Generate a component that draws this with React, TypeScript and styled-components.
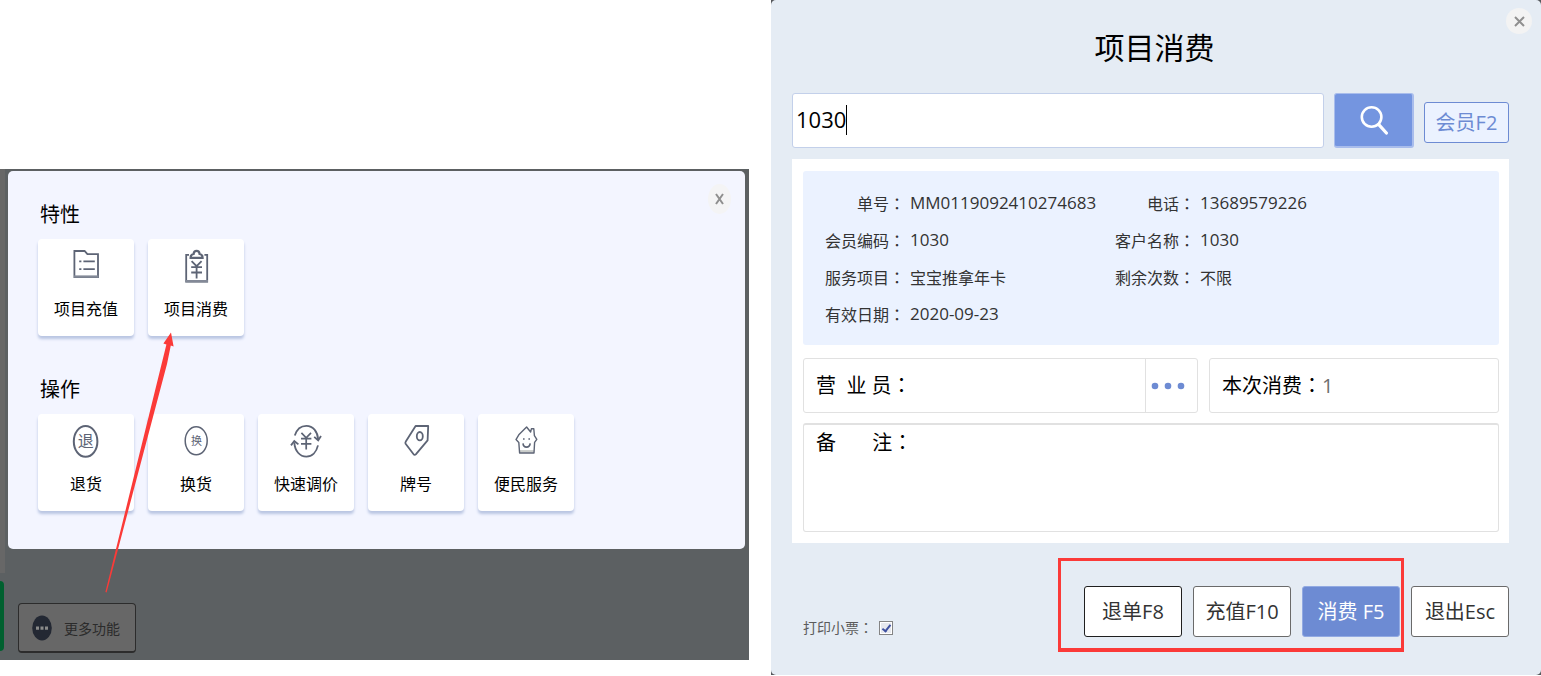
import React, { useState } from "react";
import styled, { createGlobalStyle } from "styled-components";

const GlobalStyle = createGlobalStyle`
  *, *::before, *::after { box-sizing: border-box; }
  body {
    margin: 0;
    background: #fff;
    color: #000;
    font-family: "Open Sans", "Noto Sans CJK SC", sans-serif;
    font-size: 16px;
  }
  button, input, textarea { font: inherit; color: inherit; margin: 0; }
  button { cursor: pointer; }
  h1, h2, dl, dd, dt { margin: 0; font-weight: 400; }
`;

const Page = styled.main`
  display: grid;
  grid-template-columns: minmax(0, 749fr) minmax(0, 770fr);
  column-gap: 22px;
  align-items: start;
`;

/* ---------- left: feature menu ---------- */

const Backdrop = styled.section`
  position: relative;
  display: flex;
  margin-top: 169px;
  background: #5c6062;
`;

const Rail = styled.div`
  flex: none;
  width: 5px;
  display: flex;
  flex-direction: column;
  gap: 8px;
  padding-bottom: 9px;
`;

const RailPanel = styled.div`
  flex: 1;
  background: #676767;
`;

const RailButton = styled.div`
  height: 70px;
  margin-right: 1px;
  border-radius: 0 4px 4px 0;
  background: #00602f;
`;

const Stage = styled.div`
  flex: 1;
  min-width: 0;
  padding: 2px 4px 7px 3px;
`;

const FeatureMenu = styled.div`
  position: relative;
  display: flex;
  flex-direction: column;
  gap: 40px;
  padding: 30px 30px 38px;
  border-radius: 5px;
  background: #f3f5ff;
`;

const Section = styled.section`
  display: flex;
  flex-direction: column;
  gap: 10px;
`;

const SectionTitle = styled.h2`
  padding-left: 2px;
  font-size: 20px;
  line-height: 28px;
`;

const Tiles = styled.div`
  display: flex;
  flex-wrap: wrap;
  gap: 14px;
`;

const Tile = styled.button`
  display: flex;
  flex-direction: column;
  align-items: center;
  gap: 13px;
  width: 96px;
  height: 97px;
  padding: 9px 0 0;
  border: 0;
  border-radius: 4px;
  background: #fff;
  box-shadow: 0 3px 3px #b9c5e2;
  font-size: 16px;
  line-height: 24px;
  white-space: nowrap;
`;

const TileIcon = styled.svg`
  width: 36px;
  height: 36px;
  fill: none;
  stroke: #5d6475;
  stroke-width: 1.8;

  text {
    fill: #5d6475;
    stroke: none;
    text-anchor: middle;
    font-family: "Noto Sans CJK SC", sans-serif;
  }
`;

const MenuClose = styled.button`
  position: absolute;
  top: 13px;
  right: 14px;
  display: grid;
  place-items: center;
  width: 23px;
  height: 30px;
  padding: 0;
  border: 0;
  border-radius: 50%;
  background: #f4f4f5;
`;

const MoreButton = styled.button`
  display: flex;
  align-items: center;
  gap: 12px;
  width: 118px;
  height: 50px;
  margin: 54px 0 0 10px;
  padding: 0 0 0 13px;
  border: 1px solid #2c2c2c;
  border-bottom-width: 2px;
  border-radius: 4px;
  background: #676767;
  color: #2b2b2b;
  font-size: 14px;
  white-space: nowrap;
`;

const Pointer = styled.svg`
  position: absolute;
  top: 162px;
  left: 100px;
  width: 80px;
  height: 264px;
  fill: #fb3a38;
  pointer-events: none;
`;

/* ---------- right: consumption dialog ---------- */

const DialogShell = styled.section`
  background: #55585c;
`;

const Dialog = styled.form`
  position: relative;
  padding: 28px 32px 38px 21px;
  border-radius: 5px;
  background: #e5ecf4;
`;

const DialogTitle = styled.h1`
  padding-left: 8px;
  font-size: 30px;
  line-height: 40px;
  text-align: center;
`;

const DialogClose = styled.button`
  position: absolute;
  top: 8px;
  right: 9px;
  display: grid;
  place-items: center;
  width: 26px;
  height: 26px;
  padding: 0;
  border: 0;
  border-radius: 50%;
  background: #f3f3f3;
`;

const SearchRow = styled.div`
  display: flex;
  align-items: center;
  gap: 10px;
  margin: 25px 0 11px;
`;

const SearchBox = styled.label`
  flex: 1;
  min-width: 0;
  display: flex;
  align-items: center;
  height: 55px;
  padding: 0 0 2px 3px;
  border: 1px solid #c3d0ea;
  border-radius: 3px;
  background: #fff;
`;

const SearchInput = styled.input`
  field-sizing: content;
  max-width: 100%;
  height: 30px;
  padding: 0 0 2px;
  border: 0;
  outline: 0;
  background: none;
  font-size: 22px;
  line-height: 28px;
`;

const Caret = styled.span`
  width: 1px;
  height: 30px;
  background: #000;
`;

const SearchButton = styled.button`
  display: grid;
  place-items: center;
  width: 80px;
  height: 55px;
  padding: 0;
  border: 1px solid #a9bdec;
  border-width: 1px 2px 2px 1px;
  border-radius: 3px;
  background: #7495e0;
`;

const MemberButton = styled.button`
  width: 85px;
  height: 41px;
  margin-top: 4px;
  padding: 0 0 2px;
  border: 1px solid #6d8bd3;
  border-radius: 3px;
  background: #ebf2ff;
  color: #6d8bd3;
  font-size: 20px;
  white-space: nowrap;
`;

const Card = styled.div`
  display: flex;
  flex-direction: column;
  padding: 12px 10px 11px 11px;
  background: #fff;
`;

const Info = styled.dl`
  display: grid;
  grid-template-columns: 290px minmax(0, 1fr);
  grid-auto-rows: 37px;
  align-items: center;
  padding: 13px 0;
  border-radius: 3px;
  background: #ebf2ff;
  color: #333;
`;

const InfoItem = styled.div`
  display: flex;
  align-items: center;
  gap: 5px;
  white-space: nowrap;
`;

const InfoLabel = styled.dt`
  flex: none;
  width: 102px;
  text-align: right;
`;

const InfoValue = styled.dd<{ $numeric?: boolean }>`
  font-size: ${(p) => (p.$numeric ? 17 : 16)}px;
`;

const FullColon = styled.span`
  font-family: "Noto Sans CJK TC", sans-serif;
`;

const FieldRow = styled.div`
  display: grid;
  grid-template-columns: minmax(0, 395fr) minmax(0, 290fr);
  gap: 11px;
  margin: 13px 0 10px;
`;

const Field = styled.div<{ $tall?: boolean }>`
  display: flex;
  align-items: ${(p) => (p.$tall ? "flex-start" : "stretch")};
  height: ${(p) => (p.$tall ? 109 : 55)}px;
  padding-left: 12px;
  border: 1px solid #e1e1e1;
  border-top-width: ${(p) => (p.$tall ? 2 : 1)}px;
  border-radius: 3px;
  font-size: 20px;
`;

const FieldLabel = styled.label`
  flex: none;
  align-self: center;
  line-height: 34px;
  white-space: pre;
`;

const NoteLabel = styled(FieldLabel)`
  align-self: flex-start;
`;

const FieldInput = styled.input`
  flex: 1;
  min-width: 0;
  padding: 0;
  border: 0;
  outline: 0;
  background: none;
  color: #6e6e6e;
`;

const NoteInput = styled.textarea`
  flex: 1;
  min-width: 0;
  height: 100%;
  padding: 4px 0;
  border: 0;
  outline: 0;
  background: none;
  resize: none;
`;

const PickButton = styled.button`
  display: flex;
  align-items: center;
  justify-content: center;
  flex: none;
  width: 52px;
  padding: 0 7px 0 0;
  border: 0;
  border-left: 1px solid #e1e1e1;
  background: none;
`;

const Footer = styled.div`
  display: flex;
  align-items: flex-end;
  justify-content: space-between;
  padding-top: 43px;
`;

const PrintOption = styled.label`
  display: flex;
  align-items: center;
  gap: 6px;
  padding-left: 11px;
  color: #5b5b5b;
  font-size: 14px;
  line-height: 18px;
`;

const Tick = styled.input`
  appearance: none;
  display: grid;
  place-items: center;
  width: 14px;
  height: 14px;
  border: 1px solid #848484;
  background: #e6e8ee;
  box-shadow: inset 0 0 0 1px #fff;

  &:checked::before {
    content: "";
    width: 5px;
    height: 9px;
    border: solid #3f51a0;
    border-width: 0 2px 2px 0;
    transform: rotate(38deg);
  }
`;

const Actions = styled.div`
  display: flex;
  gap: 11px;
`;

const Highlighted = styled(Actions)`
  position: relative;

  &::after {
    content: "";
    position: absolute;
    inset: -28px -4px -15px -26px;
    border: 3px solid #fb3a38;
    border-bottom-width: 4px;
    pointer-events: none;
  }
`;

type Tone = "strong" | "normal" | "primary";

const toneBorder: Record<Tone, string> = {
  strong: "#1f1f1f",
  normal: "#6a6a6a",
  primary: "#92aae2",
};

const ActionButton = styled.button<{ $tone: Tone }>`
  width: 98px;
  height: 51px;
  padding: 0 0 3px;
  border: 1px solid ${(p) => toneBorder[p.$tone]};
  border-radius: 3px;
  background: ${(p) => (p.$tone === "primary" ? "#6d8bd3" : "#fff")};
  color: ${(p) => (p.$tone === "primary" ? "#fff" : "#333")};
  font-size: 20px;
  white-space: nowrap;
`;

/* ---------- drawings ---------- */

const Yen = ({ x, y, s = 1 }: { x: number; y: number; s?: number }) => (
  <g transform={`translate(${x} ${y}) scale(${s})`}>
    <path d="M-5-8.6 0-3.6 5-8.6M0-3.6V8.6M-5.4-2.6H5.4M-5.4 2.7H5.4" />
  </g>
);

const FolderIcon = () => (
  <TileIcon viewBox="0 0 36 36">
    <path d="M6.4 3H16.6L19.4 6.2H30V29.2H6.4Z" />
    <path d="M6 28.6H30.4" stroke="#838997" strokeWidth="2.4" />
    <path d="M11.2 13.4H13.4M15.4 13.4H26.8M11.2 21.2H13.4M15.4 21.2H26.8" />
  </TileIcon>
);

const ClipboardIcon = () => (
  <TileIcon viewBox="0 0 36 36">
    <path d="M11 6.8H8.2V33.6H29.2V6.8H26.4" />
    <path d="M7.4 33.2H30" stroke="#838997" strokeWidth="2.4" />
    <path
      d="M12.6 9.8C12.6 7.6 13.8 6.2 15.6 6C15.8 3.8 16.8 2.8 18.6 2.8S21.4 3.8 21.6 6C23.4 6.2 24.6 7.6 24.6 9.8Z"
      strokeWidth="2.2"
    />
    <Yen x={18.6} y={21.8} />
  </TileIcon>
);

const ReturnIcon = () => (
  <TileIcon viewBox="0 0 36 36">
    <ellipse cx="17.6" cy="18.4" rx="11.8" ry="15.4" strokeWidth="2" />
    <text x="17.8" y="24.2" fontSize="16">退</text>
  </TileIcon>
);

const ExchangeIcon = () => (
  <TileIcon viewBox="0 0 36 36">
    <ellipse cx="18.2" cy="17.8" rx="11" ry="14" strokeWidth="1.5" />
    <text x="18.4" y="21.6" fontSize="11">换</text>
  </TileIcon>
);

const PriceIcon = () => (
  <TileIcon viewBox="0 0 36 36">
    <path d="M6.8 12.6C8.6 6.6 12.8 2.8 18.4 2.8C25 2.8 29.6 8.4 30.2 16.6" />
    <path d="M26.2 13.8 30.2 17.4 33 13" />
    <path d="M30 22.4C28.4 29.2 24 33.6 18.4 33.6C11.8 33.6 6.8 28 6.3 19.4" />
    <path d="M3 22.4 6.3 18 10.4 21.4" />
    <Yen x={18.2} y={18.2} s={0.96} />
  </TileIcon>
);

const TagIcon = () => (
  <TileIcon viewBox="0 0 36 36">
    <path d="M17.6 3H30.2L29.6 17.4L17.8 31.4Q16.6 32.6 15.6 31.2L7.6 20.8Q7 19.6 7.8 18.4Z" strokeLinejoin="round" />
    <ellipse cx="21.8" cy="13.2" rx="3" ry="4.2" />
  </TileIcon>
);

const HouseIcon = () => (
  <TileIcon viewBox="0 0 36 36">
    <path d="M12 28.4H25.8" stroke="#c9ccca" strokeWidth="2.6" />
    <path
      d="M18.6 4 22.6 9 23.4 5.8H25.8L26.4 12.6L28.8 16.4L26.6 19.4L26 30H11.6L10.8 19.4L8 16.6L10.8 11.8Z"
      strokeWidth="1.4"
      strokeLinejoin="round"
    />
    <path d="M15 16H16.6M20.4 16H22" strokeWidth="1.6" />
    <path d="M15 20.4C15.4 25.4 21.6 25.4 22.2 20.4" strokeWidth="1.6" />
  </TileIcon>
);

const Cross = ({ w, h }: { w: number; h: number }) => (
  <svg width={w} height={h} viewBox={`0 0 ${w} ${h}`} stroke="#8f8f8f" strokeWidth="2" aria-hidden="true">
    <path d={`M1 1 ${w - 1} ${h - 1}M${w - 1} 1 1 ${h - 1}`} />
  </svg>
);

const features = [
  { name: "项目充值", Icon: FolderIcon },
  { name: "项目消费", Icon: ClipboardIcon },
];

const operations = [
  { name: "退货", Icon: ReturnIcon },
  { name: "换货", Icon: ExchangeIcon },
  { name: "快速调价", Icon: PriceIcon },
  { name: "牌号", Icon: TagIcon },
  { name: "便民服务", Icon: HouseIcon },
];

const order = [
  { label: "单号", value: "MM0119092410274683", numeric: true },
  { label: "电话", value: "13689579226", numeric: true },
  { label: "会员编码", value: "1030", numeric: true },
  { label: "客户名称", value: "1030", numeric: true },
  { label: "服务项目", value: "宝宝推拿年卡" },
  { label: "剩余次数", value: "不限" },
  { label: "有效日期", value: "2020-09-23", numeric: true },
];

const TileGroup = ({ title, items }: { title: string; items: typeof features }) => (
  <Section>
    <SectionTitle>{title}</SectionTitle>
    <Tiles>
      {items.map(({ name, Icon }) => (
        <Tile key={name} type="button">
          <Icon />
          <span>{name}</span>
        </Tile>
      ))}
    </Tiles>
  </Section>
);

export default function App() {
  const [query, setQuery] = useState("1030");
  const [print, setPrint] = useState(true);

  return (
    <>
      <GlobalStyle />
      <Page>
        <Backdrop>
          <Rail>
            <RailPanel />
            <RailButton />
          </Rail>
          <Stage>
            <FeatureMenu>
              <TileGroup title="特性" items={features} />
              <TileGroup title="操作" items={operations} />
              <MenuClose type="button" aria-label="关闭">
                <Cross w={9} h={12} />
              </MenuClose>
            </FeatureMenu>
            <MoreButton type="button">
              <svg width="20" height="26" viewBox="0 0 20 26" aria-hidden="true">
                <ellipse cx="10" cy="13" rx="9.8" ry="12.4" fill="#232833" />
                <path d="M4 11.4h3v3.4H4zM8.5 11.4h3v3.4h-3zM13 11.4h3v3.4h-3z" fill="#8b8b8b" />
              </svg>
              更多功能
            </MoreButton>
          </Stage>
          <Pointer viewBox="0 0 80 264" aria-hidden="true">
            <path d="M5.4 261 66.4 13.4 63.4 12.6 71 1.6 73.6 15.4 70.8 14.4 67 33 6.6 261.4Z" />
          </Pointer>
        </Backdrop>

        <DialogShell>
          <Dialog onSubmit={(e) => e.preventDefault()}>
            <DialogTitle>项目消费</DialogTitle>
            <DialogClose type="button" aria-label="关闭">
              <Cross w={11} h={11} />
            </DialogClose>

            <SearchRow>
              <SearchBox>
                <SearchInput aria-label="会员编码" value={query} onChange={(e) => setQuery(e.target.value)} />
                <Caret />
              </SearchBox>
              <SearchButton type="submit" aria-label="搜索">
                <svg width="30" height="30" viewBox="0 0 30 30" fill="none" stroke="#fff" aria-hidden="true">
                  <circle cx="12.6" cy="12" r="9.8" strokeWidth="2.6" />
                  <path d="M19.6 19.4 27.4 28" strokeWidth="3.2" strokeLinecap="round" />
                </svg>
              </SearchButton>
              <MemberButton type="button">会员F2</MemberButton>
            </SearchRow>

            <Card>
              <Info>
                {order.map(({ label, value, numeric }) => (
                  <InfoItem key={label}>
                    <InfoLabel>
                      {label}
                      <FullColon>：</FullColon>
                    </InfoLabel>
                    <InfoValue $numeric={numeric}>{value}</InfoValue>
                  </InfoItem>
                ))}
              </Info>

              <FieldRow>
                <Field>
                  <FieldLabel htmlFor="clerk">
                    {"营  业 员"}
                    <FullColon>：</FullColon>
                  </FieldLabel>
                  <FieldInput id="clerk" />
                  <PickButton type="button" aria-label="选择营业员">
                    <svg width="34" height="8" viewBox="0 0 34 8" fill="#6d8bd3" aria-hidden="true">
                      <circle cx="4" cy="4" r="3.3" />
                      <circle cx="17" cy="4" r="3.3" />
                      <circle cx="30" cy="4" r="3.3" />
                    </svg>
                  </PickButton>
                </Field>
                <Field>
                  <FieldLabel htmlFor="count">
                    本次消费<FullColon>：</FullColon>
                  </FieldLabel>
                  <FieldInput id="count" defaultValue="1" />
                </Field>
              </FieldRow>

              <Field $tall>
                <NoteLabel htmlFor="note">
                  {"备       注"}
                  <FullColon>：</FullColon>
                </NoteLabel>
                <NoteInput id="note" />
              </Field>
            </Card>

            <Footer>
              <PrintOption>
                <span>
                  打印小票<FullColon>：</FullColon>
                </span>
                <Tick type="checkbox" checked={print} onChange={(e) => setPrint(e.target.checked)} />
              </PrintOption>
              <Actions>
                <Highlighted>
                  <ActionButton type="button" $tone="strong">退单F8</ActionButton>
                  <ActionButton type="button" $tone="normal">充值F10</ActionButton>
                  <ActionButton type="button" $tone="primary">消费 F5</ActionButton>
                </Highlighted>
                <ActionButton type="button" $tone="normal">退出Esc</ActionButton>
              </Actions>
            </Footer>
          </Dialog>
        </DialogShell>
      </Page>
    </>
  );
}
